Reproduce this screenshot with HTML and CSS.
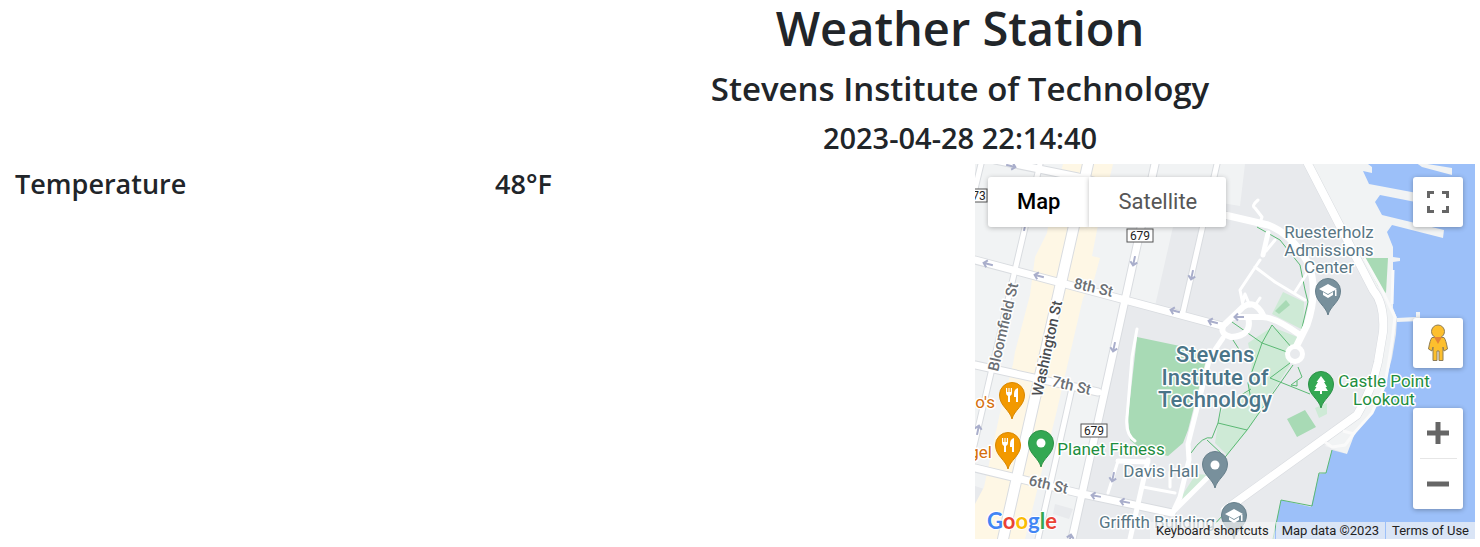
FILE: index.html
```html
<!DOCTYPE html>
<html lang="en">
<head>
<meta charset="utf-8">
<title>Weather Station</title>
<link rel="stylesheet" href="styles.css">
</head>
<body>
<header class="header">
  <h1 class="title">Weather Station</h1>
  <h2 class="subtitle">Stevens Institute of Technology</h2>
  <h3 class="timestamp">2023-04-28 22:14:40</h3>
</header>
<main class="readings">
  <h4 class="reading">Temperature</h4>
  <h4 class="reading">48°F</h4>
  <section class="map" aria-label="Map">
    <svg class="map-canvas" viewBox="0 0 500 375" preserveAspectRatio="xMidYMid slice">
      <defs>
        <path id="pin" d="M0 24C-2 15-12.500 11-12.500 0A12.500 12.500 0 0 1 12.500 0C12.500 11 2 15 0 24Z"/>
        <path id="arrow" d="M5 0H-4M-1-3.500L-4.500 0L-1 3.500"/>
        <path id="fork" d="M-6-7V-2Q-6 0-4 1V7H-2V1Q0 0 0-2V-7H-1.200V-3H-2.400V-7H-3.600V-3H-4.800V-7ZM6-7Q2-6 2-1V2H4V7H6Z"/>
        <path id="cap" d="M0-6L9-1L0 4L-9-1ZM-5 2V5L0 8L5 5V2L0 5ZM7 0H8.500V6H7Z"/>
      </defs>
      <rect width="500" height="375" fill="#e8eaed"/>
      <path class="block" d="M0 0H270L265 42L205 32L180 142L151 138L95 375H0ZM335 0H500V150H422L410 240L372 290L350 282L402 220L408 150Z"/>
      <path class="shade" d="M80 340L98 345L94 355L78 350ZM0 322L9 325L4 340L0 342Z"/>
      <path class="sand" d="M88 0H138L122 66L117 92L125 94L119 116L108 134L82 246L50 375H0V340L9 323L25 249L38 200L40 188L50 150L55 131L60 93L72 69L76 45Z"/>
      <path class="water" d="M393 0L397 3V9L388 7L394 20L463 33L461 42L405 31L400 38L407 51L469 66L468 74L417 61L412 68L418 83V93L425 94V97L418 98V144L422 154L421 170L417 194L408 228L398 247L380 269L372 290L357 286L351 309L344 310L336 343L306 336L298 375H500V0Z"/>
      <path class="block" d="M440-2L477 4V11L447 3ZM422 154L441 153V148H445V157L422 158Z"/>
      <path class="grass" d="M162 173L224 186L230 200L213 266L208 279L193 292L167 286L155 276L153 253ZM312 255L330 246L341 263L322 273ZM388 94L413 94L411 129L403 122Z"/>
      <path class="park" d="M297 163L325 174L314 185L315 201L273 266L252 291L240 279L243 259L247 246L273 228L277 199L273 179ZM308 128L329 138L328 166L297 150ZM221 310L234 311L211 337L206 333ZM340 244L352 239V250L344 254Z"/>
      <path class="grass" d="M300 147L311 136L315 141L304 150Z"/>
      <g class="trail">
        <path d="M282 63L305 76L325 101L330 126L333 138L326 168M257 158L287 179L312 188M297 161L317 184M297 161L287 179L273 219L276 236M258 176L267 190M315 199L295 214L335 230M318 201L272 266L247 297M243 259L272 266M276 225L246 243L243 259L237 274Q228 271 216 289M232 276L248 291M323 203L327 213L320 218L316 221L322 222V217M357 286L351 309H344L337 342L306 336L298 375M248 351L238 362"/>
      </g>
      <g class="road-edge">
        <path class="w5" d="M6 0L0 25M65 0L40 106L-6 303M242 0L208 148M97 224L63 375"/>
        <path class="w7" d="M180 0L150 136L97 375M20-4L103 13L250 51M0 96L150 136L247 162M0 201L123 228M0 304L103 329L197 349"/>
        <path class="w7" d="M333 0L398 126Q410 140 408 168L403 198Q397 226 382 251L257 341"/>
        <path class="w10" d="M113 0L28 375"/>
      </g>
      <g class="road">
        <path class="w5" d="M6 0L0 25M65 0L40 106L-6 303M242 0L208 148M97 224L63 375"/>
        <path class="w7" d="M180 0L150 136L97 375M20-4L103 13L250 51L293 61Q317 70 333 99Q344 125 332 161L322 181M0 96L150 136L247 162M0 201L123 228M0 304L103 329L197 349"/>
        <path class="w8" d="M333 0L398 126Q410 140 408 168L403 198Q397 226 382 251L250 346"/>
        <path class="w10" d="M113 0L28 375"/>
        <circle class="w5" cx="320" cy="190" r="7.500"/>
        <path class="w6" d="M247 163L268 143Q280 135 288 151M260 153H287Q300 153 325 171M273 153Q278 172 256 173Q245 170 248 163"/>
        <path class="w5" d="M248 174L235 193L213 280L214 296L205 333L198 348L232 314M143 297L173 298M173 296L155 375M293 69L288 91"/>
        <path class="w3" d="M285 96L265 126L268 141M280 103L300 118L330 136M320 128L334 106M283 36Q276 42 280 44L287 53L285 59M300 76L291 87M162 165L157 193L152 253Q150 270 160 277M143 297L133 329M168 323L200 329M195 308V323M268 137L270 130L275 142M281 140L285 134"/>
      </g>
      <path class="shore" d="M389 94L407 126L420 153L417 178L410 221L397 249L380 268L370 281L357 283L350 278M368 267L379 270M418 106L417 140"/>
      <g class="arrows">
        <use href="#arrow" transform="translate(36 2) rotate(194)"/>
        <use href="#arrow" transform="translate(13 100) rotate(14)"/>
        <use href="#arrow" transform="translate(64 112) rotate(14)"/>
        <use href="#arrow" transform="translate(159 97) rotate(-78)"/>
        <use href="#arrow" transform="translate(217 111) rotate(-78)"/>
        <use href="#arrow" transform="translate(139 183) rotate(-78)"/>
        <use href="#arrow" transform="translate(200 147) rotate(14)"/>
        <use href="#arrow" transform="translate(238 158) rotate(14)"/>
        <use href="#arrow" transform="translate(264 153)"/>
        <use href="#arrow" transform="translate(3 266) rotate(102)"/>
        <use href="#arrow" transform="translate(138 313) rotate(-78)"/>
        <use href="#arrow" transform="translate(121 332) rotate(10)"/>
        <use href="#arrow" transform="translate(150 338) rotate(10)"/>
        <use href="#arrow" transform="translate(95 375) rotate(102)"/>
        <use href="#arrow" transform="translate(50 62) rotate(102)"/>
      </g>
      <g class="shield">
        <rect x="-14" y="25" width="26" height="13"/><rect x="152" y="65" width="26" height="13"/><rect x="106" y="260" width="26" height="13"/>
        <text x="4" y="36">73</text><text x="165" y="76">679</text><text x="119" y="271">679</text>
      </g>
      <g class="label street">
        <text transform="translate(98 124) rotate(13)">8th St</text>
        <text transform="translate(76 222) rotate(13)">7th St</text>
        <text transform="translate(53 321) rotate(13)">6th St</text>
        <text transform="translate(23 208) rotate(-77)">Bloomfield St</text>
        <text class="main-street" transform="translate(67 233) rotate(-78)">Washington St</text>
      </g>
      <g class="label place">
        <text x="354" y="74">Ruesterholz</text><text x="354" y="92">Admissions</text><text x="354" y="109">Center</text>
        <text x="186" y="313">Davis Hall</text><text x="182" y="364">Griffith Building</text>
      </g>
      <g class="label campus">
        <text x="240" y="198">Stevens</text><text x="240" y="221">Institute of</text><text x="240" y="243">Technology</text>
      </g>
      <g class="label green">
        <text x="409" y="223">Castle Point</text><text x="409" y="241">Lookout</text><text x="136" y="291">Planet Fitness</text>
      </g>
      <g class="label food"><text x="20" y="244">o's</text><text x="17" y="294">gel</text></g>
      <g class="pin-food"><use href="#pin" x="37" y="231"/><use href="#pin" x="33" y="281"/></g>
      <g class="pin-green"><use href="#pin" x="66" y="279"/><use href="#pin" x="346" y="220"/></g>
      <g class="pin-grey"><use href="#pin" x="240" y="300"/><use href="#pin" x="259" y="351"/><use href="#pin" x="353" y="127"/></g>
      <g fill="#fff">
        <use href="#fork" x="37" y="231"/><use href="#fork" x="33" y="281"/>
        <circle cx="66" cy="279" r="4.500"/><circle cx="240" cy="301" r="4.500"/>
        <use href="#cap" x="259" y="351"/><use href="#cap" x="353" y="126"/>
        <path d="M346 212L350.500 218H349L352 223H350.500L353 227H347V230H345V227H339L341.500 223H340L343 218H341.500Z"/>
      </g>
      <text class="logo" x="12" y="365"><tspan fill="#4285f4">G</tspan><tspan fill="#ea4335">o</tspan><tspan fill="#fbbc04">o</tspan><tspan fill="#4285f4">g</tspan><tspan fill="#34a853">l</tspan><tspan fill="#ea4335">e</tspan></text>
    </svg>
    <div class="map-types">
      <button class="map-type active" type="button">Map</button>
      <button class="map-type" type="button">Satellite</button>
    </div>
    <button class="control fullscreen" type="button" aria-label="Toggle fullscreen view">
      <svg width="22" height="22" viewBox="0 0 22 22"><path d="M1.500 7V1.500H7M15 1.500H20.500V7M20.500 15V20.500H15M7 20.500H1.500V15" fill="none" stroke="#666" stroke-width="3"/></svg>
    </button>
    <div class="map-tools">
      <button class="control" type="button" aria-label="Street View">
        <svg width="22" height="38" viewBox="0 0 22 38"><g fill="#fdbf2d" stroke="#8f7d55" stroke-width="1"><path d="M5 13.500H17Q19 16 20.500 25L17 27L16 23V36.500H12V27H10V36.500H6V23L5 27L1.500 25Q3 16 5 13.500Z"/><circle cx="11" cy="7.500" r="6.500"/></g><path d="M7 13H15L11 20Z" fill="#e58434"/></svg>
      </button>
      <div class="zoom">
        <button class="zoom-button" type="button" aria-label="Zoom in"><svg width="22" height="22" viewBox="0 0 22 22"><path d="M0 11H22M11 0V22" stroke="#666" stroke-width="5"/></svg></button>
        <button class="zoom-button" type="button" aria-label="Zoom out"><svg width="22" height="22" viewBox="0 0 22 22"><path d="M0 11H22" stroke="#666" stroke-width="5"/></svg></button>
      </div>
    </div>
    <footer class="attribution">
      <button class="credit shortcuts" type="button">Keyboard shortcuts</button>
      <span class="credit">Map data ©2023</span>
      <a class="credit" href="#terms">Terms of Use</a>
    </footer>
  </section>
</main>
</body>
</html>
```
FILE: styles.css
```css
* { box-sizing: border-box; }
body { margin: 0; background: #fff; color: #212529; font-family: "Open Sans", "Noto Sans", sans-serif; overflow-x: hidden; }
h1, h2, h3, h4 { margin: 0; font-weight: 600; }
.header { padding-left: 440px; text-align: center; }
.title { font-size: 47px; line-height: 56px; }
.subtitle { margin-top: 12px; font-size: 33px; line-height: 42px; }
.timestamp { margin: 10px 0 8px; font-size: 29px; line-height: 36px; }
.readings { display: grid; grid-template-columns: 1fr 1fr 500px; padding: 0 5px 0 15px; }
.reading { font-size: 27px; line-height: 40px; }
.map { position: relative; height: 375px; overflow: hidden; font-family: Roboto, sans-serif; }
.map-canvas { display: block; width: 100%; height: 100%; }

.block { fill: #f1f3f4; }
.shade { fill: #e8eaed; }
.sand { fill: #fef7e5; }
.water { fill: #9cc0f9; }
.grass { fill: #a8dab5; }
.park { fill: #ceead6; }
.trail { fill: none; stroke: #5bb974; stroke-width: 1; }
.road, .road-edge { fill: none; stroke: #fff; stroke-linecap: round; stroke-linejoin: round; }
.road-edge { stroke: #d9dce0; }
.w3 { stroke-width: 3; }
.w5 { stroke-width: 5; }
.w6 { stroke-width: 6; }
.w7 { stroke-width: 7; }
.w8 { stroke-width: 8; }
.w10 { stroke-width: 10; }
.road-edge .w5 { stroke-width: 7; }
.road-edge .w7 { stroke-width: 9; }
.road-edge .w10 { stroke-width: 12; }
.shore { fill: none; stroke: #fafafa; stroke-width: 3; }
.arrows { fill: none; stroke: #a9aecb; stroke-width: 2; }
.shield rect { fill: #fff; stroke: #555; stroke-width: 1; }
.shield text { fill: #222; font-size: 12px; text-anchor: middle; }
.label { font-size: 17px; text-anchor: middle; stroke: #fff; stroke-width: 3; stroke-linejoin: round; paint-order: stroke; }
.street { fill: #6b6f74; font-size: 15px; font-weight: 500; text-anchor: start; }
.main-street { fill: #494c50; }
.place { fill: #587684; }
.campus { fill: #4a7588; font-size: 22px; font-weight: 500; }
.green { fill: #1e8e3e; }
.food { fill: #d56e0c; text-anchor: end; }
.pin-food { fill: #f29900; stroke: #d88700; }
.pin-green { fill: #34a853; stroke: #2b9147; }
.pin-grey { fill: #78909c; stroke: #667f8b; }
.logo { font-family: Lato, sans-serif; font-size: 22px; font-weight: 700; stroke: #fff; stroke-width: 2; paint-order: stroke; }

button { border: 0; padding: 0; background: #fff; font-family: inherit; }
.map-types { position: absolute; top: 13px; left: 13px; display: flex; }
.map-type { height: 50px; padding: 0 29px 2px; color: #565656; font-size: 22px; box-shadow: 0 1px 5px rgba(0, 0, 0, 0.25); border-radius: 0 3px 3px 0; }
.map-type.active { color: #000; font-weight: 500; border-radius: 3px 0 0 3px; }
.control, .zoom { display: flex; align-items: center; justify-content: center; width: 50px; border-radius: 3px; box-shadow: 0 1px 5px rgba(0, 0, 0, 0.3); }
.control { height: 50px; }
.fullscreen { position: absolute; top: 13px; right: 12px; }
.map-tools { position: absolute; right: 12px; bottom: 30px; display: grid; gap: 40px; }
.zoom { flex-direction: column; background: #fff; }
.zoom-button { display: grid; place-items: center; width: 37px; height: 50px; background: none; }
.zoom-button + .zoom-button { height: 51px; border-top: 1px solid #e6e6e6; }
.attribution { position: absolute; right: 0; bottom: 0; display: flex; gap: 1px; }
.credit { padding: 0 6px; background: rgba(245, 245, 245, 0.7); color: #222; font-size: 13px; line-height: 17px; text-decoration: none; }
```
